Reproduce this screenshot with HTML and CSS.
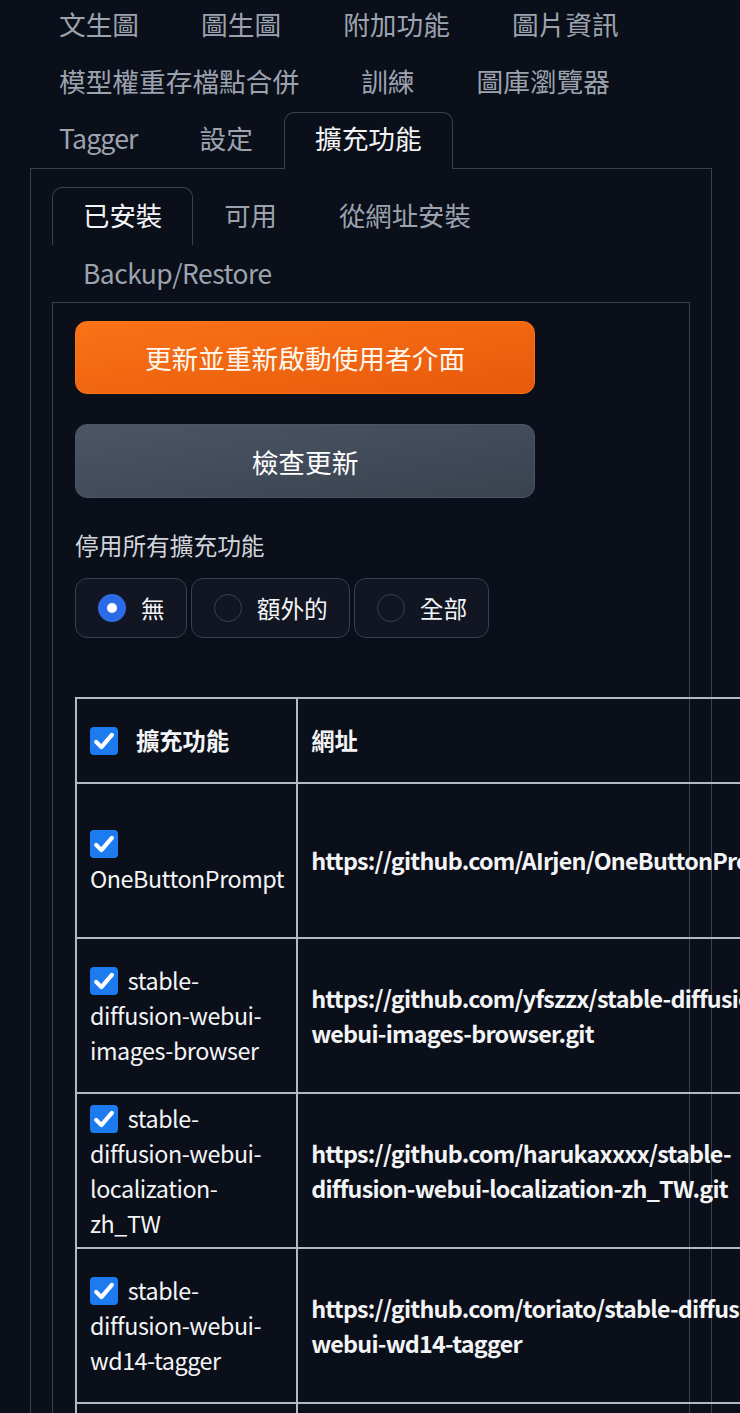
FILE: index.html
```html
<!DOCTYPE html>
<html>

<head>
    <title>擴充功能</title>
    <link rel="stylesheet" href="styles.css">
</head>

<body>
    <div class="app">
        <div class="tabNav topNav">
            <button class="tabBtn">文生圖</button>
            <button class="tabBtn">圖生圖</button>
            <button class="tabBtn">附加功能</button>
            <button class="tabBtn">圖片資訊</button>
            <button class="tabBtn">模型權重存檔點合併</button>
            <button class="tabBtn">訓練</button>
            <button class="tabBtn">圖庫瀏覽器</button>
            <button class="tabBtn latin">Tagger</button>
            <button class="tabBtn">設定</button>
            <button class="tabBtn selected">擴充功能</button>
        </div>
        <div class="tabPanel">
            <div class="tabNav subNav">
                <button class="tabBtn selected">已安裝</button>
                <button class="tabBtn">可用</button>
                <button class="tabBtn">從網址安裝</button>
                <button class="tabBtn latin">Backup/Restore</button>
            </div>
            <div class="tabPanel innerPanel">
                <button class="bigBtn primary">更新並重新啟動使用者介面</button>
                <button class="bigBtn secondary">檢查更新</button>
                <label class="fieldLbl">停用所有擴充功能</label>
                <div class="radioGroup">
                    <label class="radioItem"><span class="radioDot checked"></span>無</label>
                    <label class="radioItem"><span class="radioDot"></span>額外的</label>
                    <label class="radioItem"><span class="radioDot"></span>全部</label>
                </div>
                <table class="extTable">
                    <thead>
                        <tr>
                            <th class="nameCol"><span class="check"><svg viewBox="0 0 16 16"><path d="M3.5 8.5l3 3 6-7" /></svg></span>擴充功能</th>
                            <th class="urlHead">網址</th>
                            <th>分支</th>
                            <th>版本</th>
                        </tr>
                    </thead>
                    <tbody>
                        <tr>
                            <td class="nameCol"><span class="check"><svg viewBox="0 0 16 16"><path d="M3.5 8.5l3 3 6-7" /></svg></span> OneButtonPrompt</td>
                            <td class="urlCol">https://github.com/AIrjen/OneButtonPrompt</td>
                            <td>main</td>
                            <td>a1b2c3d4</td>
                        </tr>
                        <tr>
                            <td class="nameCol"><span class="check"><svg viewBox="0 0 16 16"><path d="M3.5 8.5l3 3 6-7" /></svg></span> stable-diffusion-webui-images-browser</td>
                            <td class="urlCol">https://github.com/yfszzx/stable-diffusion-webui-images-browser.git</td>
                            <td>main</td>
                            <td>5e6f7a8b</td>
                        </tr>
                        <tr>
                            <td class="nameCol"><span class="check"><svg viewBox="0 0 16 16"><path d="M3.5 8.5l3 3 6-7" /></svg></span> stable-diffusion-webui-localization-zh_TW</td>
                            <td class="urlCol">https://github.com/harukaxxxx/stable-diffusion-webui-localization-zh_TW.git</td>
                            <td>main</td>
                            <td>9c0d1e2f</td>
                        </tr>
                        <tr>
                            <td class="nameCol"><span class="check"><svg viewBox="0 0 16 16"><path d="M3.5 8.5l3 3 6-7" /></svg></span> stable-diffusion-webui-wd14-tagger</td>
                            <td class="urlCol">https://github.com/toriato/stable-diffusion-webui-wd14-tagger</td>
                            <td>master</td>
                            <td>3a4b5c6d</td>
                        </tr>
                        <tr>
                            <td class="nameCol"><span class="check"><svg viewBox="0 0 16 16"><path d="M3.5 8.5l3 3 6-7" /></svg></span> LDSR</td>
                            <td class="urlCol"></td>
                            <td></td>
                            <td></td>
                        </tr>
                    </tbody>
                </table>
            </div>
        </div>
    </div>
</body>

</html>
```

FILE: styles.css
```css
* {
    box-sizing: border-box;
}

html,
body {
    margin: 0;
    padding: 0;
    height: 100%;
    overflow: hidden;
    background: #0b0f19;
}

body {
    font-family: "Noto Sans CJK TC", "Noto Sans CJK SC", sans-serif;
    color: #e5e7eb;
}

.app {
    margin-top: -2px;
    padding-left: 30px;
    width: 712px;
}

.tabNav {
    display: flex;
    flex-wrap: wrap;
    margin-bottom: -1px;
    position: relative;
    z-index: 1;
}

.topNav {
    margin-left: -2px;
}

.tabBtn {
    height: 57px;
    padding: 0 30px 5px 30px;
    border: 1px solid transparent;
    border-bottom: none;
    border-radius: 10px 10px 0 0;
    background: transparent;
    color: #9ca3af;
    font-family: inherit;
    font-size: 26.7px;
    line-height: 1;
    display: flex;
    align-items: center;
}

.tabBtn.latin {
    letter-spacing: -0.5px;
}

.topNav .tabBtn.latin {
    letter-spacing: -0.85px;
}

.tabBtn.selected {
    border-color: #374151;
    background: #0b0f19;
    color: #f3f4f6;
}

.tabPanel {
    border: 1px solid #374151;
    padding: 18px 21px 0 21px;
    height: 1400px;
}

.subNav .tabBtn {
    height: 58px;
    font-size: 26.4px;
    padding: 0 30px 3px 30px;
}

.innerPanel {
    display: flex;
    flex-direction: column;
    align-items: flex-start;
    padding: 18px 22px 0 22px;
    border-bottom: none;
}

.bigBtn {
    width: 460px;
    height: 74px;
    border-radius: 12px;
    font-family: inherit;
    font-size: 26.7px;
    color: #ffffff;
    margin-bottom: 30px;
}

.primary {
    height: 73px;
    background: linear-gradient(to bottom right, #f97316, #e8590c);
    border: 1px solid #f97316;
    color: #fff7ed;
}

.secondary {
    background: linear-gradient(to bottom right, #4b5563, #3a4250);
    border: 1px solid #4b5563;
}

.fieldLbl {
    font-size: 23.7px;
    line-height: 34px;
    color: #d1d5db;
    margin-bottom: 16px;
}

.radioGroup {
    display: flex;
    gap: 4px;
    margin-bottom: 59px;
}

.radioItem {
    display: flex;
    align-items: center;
    height: 60px;
    padding: 0 21px 0 22px;
    border: 1px solid #374151;
    border-radius: 12px;
    background: #111622;
    font-size: 23.7px;
    color: #f3f4f6;
}

.radioDot {
    width: 28px;
    height: 28px;
    border-radius: 50%;
    border: 1px solid #374151;
    margin-right: 15px;
    flex-shrink: 0;
}

.radioDot.checked {
    border: 9px solid #2c6be6;
    background: #ffffff;
}

.extTable {
    border-collapse: collapse;
    font-size: 23.3px;
    line-height: 35px;
    color: #f3f4f6;
}

.extTable th,
.extTable td {
    border: 2px solid #b4b8c0;
    padding: 0 12px 0 13px;
    text-align: left;
    vertical-align: middle;
}

.extTable td {
    letter-spacing: -0.45px;
}

.extTable thead tr {
    height: 85px;
}

.extTable tbody tr {
    height: 155px;
}

.extTable th {
    font-weight: 700;
}

.nameCol {
    width: 1px;
}

.urlCol,
.urlHead {
    min-width: 510px;
    max-width: 510px;
}

.extTable .urlCol {
    font-weight: 600;
    letter-spacing: -0.75px;
}

.check {
    display: inline-block;
    width: 28px;
    height: 28px;
    border-radius: 4px;
    background: #1d7bf0;
    vertical-align: -5px;
    margin-right: 5px;
}

th .check {
    margin-right: 18px;
}

.check svg {
    display: block;
    width: 28px;
    height: 28px;
    fill: none;
    stroke: #ffffff;
    stroke-width: 2.4;
    stroke-linecap: round;
    stroke-linejoin: round;
}
```
